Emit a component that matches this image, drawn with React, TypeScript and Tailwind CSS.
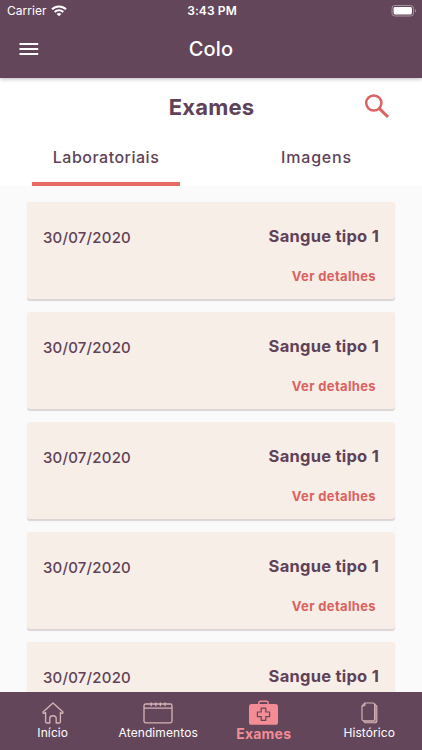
import React from "react";

const exams = [1, 2, 3, 4, 5].map((id) => ({ id, date: "30/07/2020", name: "Sangue tipo 1" }));

function StatusBar() {
  return (
    <div className="flex h-[22px] items-center justify-between pl-[7px] pr-[5px]">
      <div className="flex w-[120px] items-center gap-[4px]">
        <span className="text-[12px] leading-[22px] tracking-[0.05px]">Carrier</span>
        <svg className="-mt-px" width="16" height="12" viewBox="0 0 16 12" fill="none" stroke="currentColor">
          <path d="M1 4.3C4.9.5 11.1.5 15 4.3" strokeWidth="2.1" />
          <path d="M3.7 7c2.4-2.3 6.2-2.3 8.6 0" strokeWidth="2" />
          <path d="M5.6 8.9c1.4-1.3 3.4-1.3 4.8 0L8 11.3z" fill="currentColor" stroke="none" />
        </svg>
      </div>
      <span className="text-[12px] font-semibold leading-[22px] tracking-[0.1px]">3:43 PM</span>
      <div className="flex w-[120px] justify-end">
        <svg className="-mt-px" width="26" height="12" viewBox="0 0 26 12" fill="none">
          <rect x="1" y=".5" width="21.5" height="10.5" rx="2.8" stroke="#a493a0" />
          <rect x="2.6" y="2.1" width="18.3" height="7.3" rx="1.3" fill="white" />
          <path d="M24 4v3.6c1.3-.5 1.3-3.1 0-3.6z" fill="#a493a0" />
        </svg>
      </div>
    </div>
  );
}

function ExamCard({ date, name }: { date: string; name: string }) {
  return (
    <article className="flex h-[97px] shrink-0 justify-between rounded-[3px] bg-[#f7eee8] pl-4 pr-[17px] pt-6 shadow-[0_1.5px_1px_#dcd5d6]">
      <span className="pt-px text-[15px] font-medium leading-[22px] tracking-[0.2px]">{date}</span>
      <div className="flex flex-col items-end">
        <span className="-mr-px text-[16.5px] font-bold leading-[21px] tracking-[0.25px]">{name}</span>
        <a className="mr-[2px] mt-[18.5px] text-[13px] font-bold leading-[20px] tracking-[0.35px] text-[#db6260]">Ver detalhes</a>
      </div>
    </article>
  );
}

function HomeIcon() {
  return (
    <svg width="22" height="22" viewBox="0 0 22 22" fill="none" stroke="#d4b3b4" strokeWidth="1.35" strokeLinejoin="round" strokeLinecap="round">
      <path d="M11 1 1.3 9.8c-.7.7.1 2 1.2 1.3l1.1-.6v9.2c0 .8.5 1.3 1.3 1.3h2.9v-4.6c0-3.6 6.4-3.6 6.4 0V21h2.9c.8 0 1.3-.5 1.3-1.3v-9.2l1.1.6c1.1.7 1.9-.6 1.2-1.3z" />
    </svg>
  );
}

function CalendarIcon() {
  return (
    <svg width="30" height="22" viewBox="0 0 30 22" fill="none" stroke="#d4b3b4" strokeWidth="1.3">
      <rect x="1" y="2" width="28" height="18.8" rx="1.8" />
      <path d="M1 6.2h28M8.2.5v3.7M12.8.5v3.7M17.4.5v3.7M22 .5v3.7" />
    </svg>
  );
}

function MedicalIcon() {
  return (
    <svg width="29" height="25" viewBox="0 0 29 25" fill="none">
      <path d="M9.8 5V3c0-1 .7-1.8 1.8-1.8h5.8c1.1 0 1.8.8 1.8 1.8v2" stroke="#f28c95" strokeWidth="1.4" />
      <rect y="4" width="29" height="20.8" rx="2.6" fill="#f28c95" />
      <path d="M12.2 8.2h4.6v3.8h3.8v4.6h-3.8v3.8h-4.6v-3.8H8.4V12h3.8z" stroke="#64465b" strokeWidth="1.2" strokeLinejoin="round" />
    </svg>
  );
}

function HistoryIcon() {
  return (
    <svg width="17" height="22" viewBox="0 0 17 22" fill="none" stroke="#d4b3b4" strokeWidth="1.15" strokeLinejoin="round">
      <path d="M4 1h8c1 0 1.6.7 1.6 1.6V17c0 1-.6 1.7-1.6 1.7H2.6C1.6 18.7 1 18 1 17V4z" />
      <path d="M4 1v1.8C4 3.6 3.6 4 2.8 4H1" />
      <path d="m2.5 18.8 1.5 1.9h9.7c1.3 0 2.1-.8 2.1-2V4.2L13.6 2" />
      <path d="M14.7 3.2v15.3c0 .8-.5 1.2-1.3 1.2H3.3" strokeWidth=".8" />
    </svg>
  );
}

export default function App() {
  return (
    <div className="flex h-[750px] w-[422px] flex-col overflow-hidden bg-[#fafafa] font-['Inter','Liberation_Sans',sans-serif] text-[#5f4257]">
      <header className="z-10 h-[78px] shrink-0 bg-[#64465b] text-white shadow-[0_1px_4px_rgba(70,45,65,0.35)]">
        <StatusBar />
        <div className="grid h-[54px] grid-cols-3 items-center px-[19px]">
          <svg width="20" height="14" viewBox="0 0 20 14" fill="white">
            <path d="M.5 1h18.7v2.1H.5zM.5 6h18.7v2.1H.5zM.5 11h18.7v2.1H.5z" />
          </svg>
          <h1 className="text-center text-[20px] font-medium leading-6 tracking-[0.2px]">Colo</h1>
        </div>
      </header>
      <section className="flex h-[107.5px] shrink-0 flex-col bg-white">
        <div className="grid h-[57px] grid-cols-3 items-center pl-[32px] pr-[31px]">
          <h2 className="col-start-2 whitespace-nowrap text-center text-[22px] font-bold leading-7 tracking-[0.15px]">Exames</h2>
          <svg className="justify-self-end" width="28" height="28" viewBox="0 0 28 28" fill="none" stroke="#db6260">
            <circle cx="10.8" cy="10" r="7.6" strokeWidth="2.5" />
            <path d="m16.2 15.4 8.8 8.6" strokeWidth="3" />
          </svg>
        </div>
        <nav className="grid flex-1 grid-cols-2 font-medium">
          <div className="ml-[32px] flex w-[148px] items-start justify-center border-b-4 border-[#e56b63] pt-[10px] leading-6">
            <span className="text-[16px] tracking-[0.5px]">Laboratoriais</span>
          </div>
          <div className="flex items-start justify-center pt-[10px] leading-6">
            <span className="text-[16px] tracking-[0.8px]">Imagens</span>
          </div>
        </nav>
      </section>
      <main className="flex min-h-0 flex-1 flex-col gap-[13px] overflow-hidden px-[27px] pt-[16.5px]">
        {exams.map((exam) => (
          <ExamCard key={exam.id} date={exam.date} name={exam.name} />
        ))}
      </main>
      <footer className="grid h-[58px] shrink-0 grid-cols-4 bg-[#64465b] text-[12px] text-white">
        <a className="flex flex-col items-center pt-[10px]">
          <HomeIcon />
          <span className="leading-[18px] tracking-[0.1px]">Início</span>
        </a>
        <a className="flex flex-col items-center pt-[10px]">
          <CalendarIcon />
          <span className="leading-[18px] tracking-[0.1px]">Atendimentos</span>
        </a>
        <a className="flex flex-col items-center pt-[8px] text-[#f28c95]">
          <MedicalIcon />
          <span className="text-[14px] font-bold leading-[17px] tracking-[0.2px]">Exames</span>
        </a>
        <a className="flex flex-col items-center pt-[10px]">
          <HistoryIcon />
          <span className="leading-[18px] tracking-[0.1px]">Histórico</span>
        </a>
      </footer>
    </div>
  );
}
